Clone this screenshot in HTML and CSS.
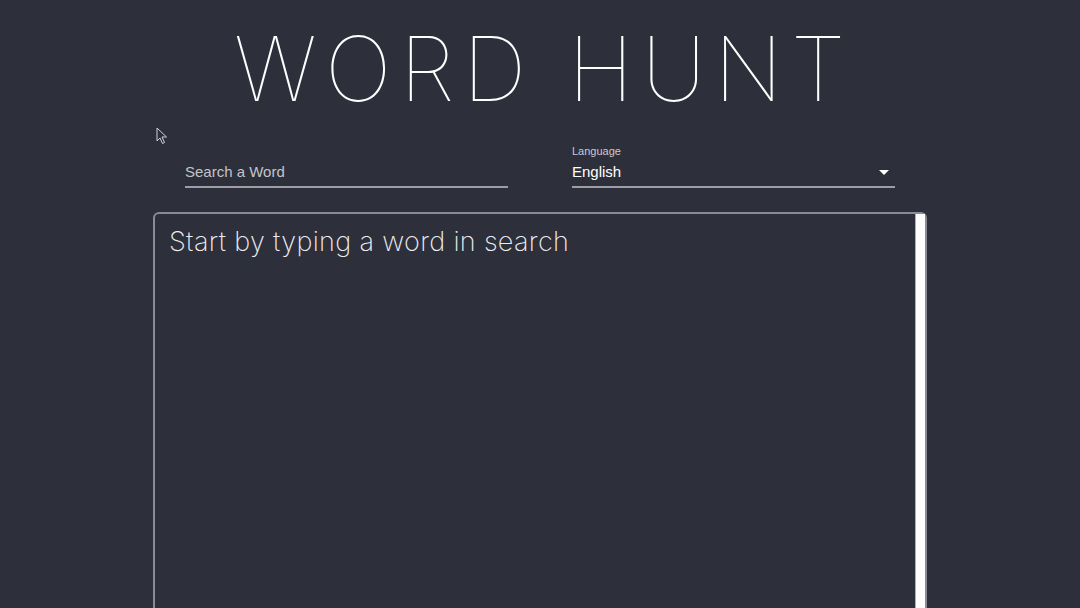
FILE: index.html
```html
<!DOCTYPE html>
<html>
<head>
<meta charset="utf-8">
<link rel="stylesheet" href="styles.css">
</head>
<body>
<div class="app">
  <h1 class="title">WORD HUNT</h1>
  <div class="controls">
    <div class="field">
      <div class="label-spacer"></div>
      <div class="input">Search a Word</div>
    </div>
    <div class="field">
      <div class="small-label">Language</div>
      <div class="input select">
        <span class="value">English</span>
        <svg class="caret" width="10" height="5" viewBox="0 0 10 5"><path d="M0 0 L10 0 L5 5 Z" fill="#fff"/></svg>
      </div>
    </div>
  </div>
  <div class="results">
    <div class="results-inner">
      <p class="placeholder">Start by typing a word in search</p>
    </div>
    <div class="scrollbar"></div>
  </div>
</div>
<svg class="cursor" width="12" height="18" viewBox="0 0 12 18"><path d="M1 1 L1 14 L4 11 L6.5 16.5 L8.5 15.5 L6 10 L10.5 10 Z" fill="#2d2f3b" stroke="#d0d0d4" stroke-width="1"/></svg>
</body>
</html>
```

FILE: styles.css
```css
html, body {
  margin: 0;
  padding: 0;
  background: #2d2f3b;
  height: 608px;
  overflow: hidden;
}
body {
  font-family: "Liberation Sans", Arial, sans-serif;
  color: #fff;
  position: relative;
}
.app {
  width: 774px;
  margin: 0 auto;
  display: flex;
  flex-direction: column;
  align-items: center;
}
.title {
  margin: 20px 0 0 8px;
  font-family: "Inter", "Lato", sans-serif;
  font-weight: 100;
  font-size: 89px;
  line-height: 98px;
  letter-spacing: 8.3px;
  color: #fff;
}
.controls {
  width: 710px;
  display: flex;
  justify-content: space-between;
  margin-top: 26px;
}
.field {
  width: 323px;
  display: flex;
  flex-direction: column;
}
.label-spacer { height: 14px; }
.small-label {
  font-size: 11px;
  line-height: 14px;
  color: #c9c9cf;
}
.input {
  height: 30px;
  box-sizing: border-box;
  border-bottom: 2px solid #9c9da5;
  font-size: 15px;
  line-height: 20px;
  color: #c4c4ca;
  display: flex;
  align-items: flex-end;
  padding-bottom: 4px;
}
.select { justify-content: space-between; }
.select .value { color: #fff; }
.caret { margin-right: 6px; margin-bottom: 7px; }
.results {
  margin-top: 24px;
  width: 774px;
  height: 420px;
  box-sizing: border-box;
  border: 2px solid #8a8b93;
  border-radius: 6px;
  display: flex;
}
.results-inner {
  flex: 1;
  padding: 12px 14px;
}
.placeholder {
  margin: 0;
  font-family: "Inter", "Lato", sans-serif;
  font-weight: 200;
  font-size: 27px;
  line-height: 32px;
  letter-spacing: 0.32px;
  color: #ececf0;
}
.scrollbar {
  width: 9px;
  background: #fdfdfd;
  border-left: 1px solid #b0b0b6;
}
.cursor {
  position: absolute;
  left: 156px;
  top: 127px;
}
```
